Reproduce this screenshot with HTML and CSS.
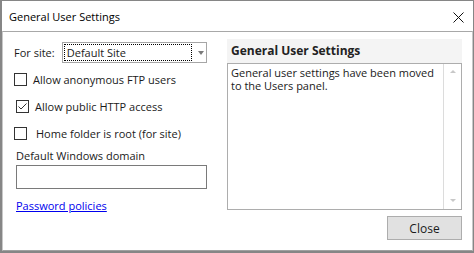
FILE: index.html
```html
<!DOCTYPE html>
<html lang="en">
<head>
  <meta charset="UTF-8">
  <title>General User Settings</title>
  <link rel="stylesheet" href="styles.css">
</head>
<body>
  <div class="window">
    <div class="titlebar">
      <span class="title">General User Settings</span>
      <svg class="close-x" width="11" height="11" viewBox="0 0 11 11">
        <path d="M0.5 0.5 L10.5 10.5 M10.5 0.5 L0.5 10.5" stroke="#111" stroke-width="1" fill="none"/>
      </svg>
    </div>

    <div class="client">
      <div class="left">
        <div class="site-row">
          <span class="site-label">For site:</span>
          <div class="select">
            <span class="select-value">Default Site</span>
            <span class="select-arrow"></span>
          </div>
        </div>

        <label class="check-row">
          <span class="box"></span>
          <span>Allow anonymous FTP users</span>
        </label>
        <label class="check-row shifted">
          <span class="box">
            <svg width="11" height="11" viewBox="0 0 11 11">
              <path d="M1.5 5.5 L4 8 L9.5 2.5" stroke="#333" stroke-width="1" fill="none"/>
            </svg>
          </span>
          <span>Allow public HTTP access</span>
        </label>
        <label class="check-row third">
          <span class="box"></span>
          <span>Home folder is root (for site)</span>
        </label>

        <div class="field-label">Default Windows domain</div>
        <div class="textfield"></div>

        <a class="link" href="#">Password policies</a>
      </div>

      <div class="right">
        <div class="panel-head">General User Settings</div>
        <div class="memo">
          <div class="memo-text">General user settings have been moved to the Users panel.</div>
          <div class="scroll">
            <span class="arrow-up"></span>
            <span class="arrow-down"></span>
          </div>
        </div>
        <div class="buttons">
          <button class="btn">Close</button>
        </div>
      </div>
    </div>
  </div>
</body>
</html>
```

FILE: styles.css
```css
html, body {
  margin: 0;
  padding: 0;
  background: #fff;
}
body {
  font-family: "Open Sans", "Noto Sans", sans-serif;
  font-size: 11px;
  color: #1a1a1a;
}
.window {
  width: 474px;
  height: 253px;
  box-sizing: border-box;
  border: 1px solid #868686;
  border-left-width: 2px;
  border-bottom-width: 2px;
  display: flex;
  flex-direction: column;
  background: #fff;
}
.titlebar {
  height: 30px;
  display: flex;
  align-items: center;
  justify-content: space-between;
  padding: 0 9px 0 7px;
  flex-shrink: 0;
}
.title {
  font-size: 11px;
  color: #000;
}
.close-x {
  margin-top: 2px;
}
.client {
  flex: 1;
  border-top: 1px solid #a8a8a8;
  border-left: 1px solid #c8c8c8;
  border-right: 1px solid #c8c8c8;
  border-bottom: 1px solid #a0a0a0;
  display: flex;
  gap: 20px;
  padding: 7px 0 0 11px;
}
.left {
  width: 193px;
  display: flex;
  flex-direction: column;
}
.site-row {
  margin-top: 3px;
  height: 21px;
  display: flex;
  align-items: center;
}
.site-label {
  width: 48px;
}
.select {
  width: 146px;
  height: 21px;
  box-sizing: border-box;
  border: 1px solid #a6a6a6;
  display: flex;
  align-items: center;
  padding: 1px;
}
.select-value {
  flex: 0 0 128px;
  height: 17px;
  box-sizing: border-box;
  border: 1px dotted #000;
  display: flex;
  align-items: center;
  padding-left: 2px;
}
.select-arrow {
  margin-left: 6px;
  width: 0;
  height: 0;
  border-left: 3px solid transparent;
  border-right: 3px solid transparent;
  border-top: 4px solid #7a7a7a;
}
.check-row {
  height: 27px;
  display: flex;
  align-items: center;
  gap: 6px;
}
.site-row + .check-row {
  margin-top: 3px;
}
.check-row.shifted {
  padding-left: 2px;
}
.check-row.third .box {
  margin-right: 3px;
}
.box {
  width: 13px;
  height: 13px;
  box-sizing: border-box;
  border: 1px solid #333;
  background: #fff;
  display: flex;
  align-items: center;
  justify-content: center;
}
.field-label {
  height: 18px;
  line-height: 18px;
  padding-left: 2px;
}
.textfield {
  margin-left: 2px;
  width: 191px;
  height: 24px;
  box-sizing: border-box;
  border: 1px solid #7a7a7a;
}
.link {
  margin-top: 8px;
  margin-left: 2px;
  height: 18px;
  line-height: 18px;
  color: #0000ee;
  align-self: flex-start;
}
.right {
  width: 235px;
  display: flex;
  flex-direction: column;
}
.panel-head {
  height: 24px;
  line-height: 24px;
  background: #f4f4f4;
  font-weight: bold;
  font-size: 12px;
  padding-left: 4px;
  color: #222;
}
.memo {
  height: 147px;
  box-sizing: border-box;
  border: 1px solid #adadad;
  display: flex;
}
.memo-text {
  flex: 1;
  padding: 2px 3px;
  line-height: 13px;
}
.scroll {
  width: 17px;
  border-left: 1px solid #dcdcdc;
  display: flex;
  flex-direction: column;
  justify-content: space-between;
  align-items: center;
  padding: 6px 0 7px;
}
.arrow-up, .arrow-down {
  width: 0;
  height: 0;
  border-left: 3px solid transparent;
  border-right: 3px solid transparent;
}
.arrow-up {
  border-bottom: 3px solid #c8c8c8;
}
.arrow-down {
  border-top: 3px solid #c8c8c8;
}
.buttons {
  margin-top: 6px;
  display: flex;
  justify-content: flex-end;
}
.btn {
  width: 75px;
  height: 24px;
  background: #e1e1e1;
  border: 1px solid #adadad;
  font-family: inherit;
  font-size: 12px;
  color: #1a1a1a;
  padding: 0;
}
```
